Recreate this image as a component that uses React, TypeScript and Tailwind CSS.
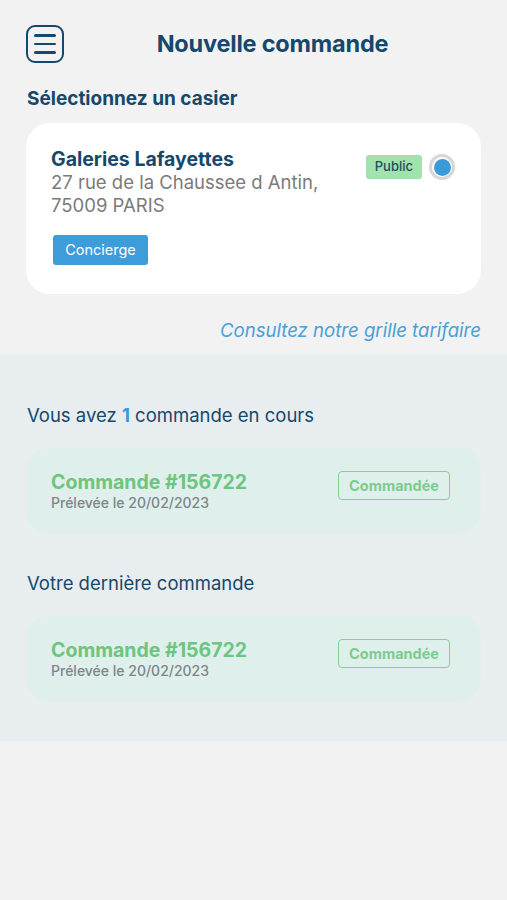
import React from "react";

const ORDERS_IN_PROGRESS = [{ id: "156722", date: "20/02/2023", status: "Commandée" }];
const LAST_ORDER = { id: "156722", date: "20/02/2023", status: "Commandée" };

function MenuIcon() {
  return (
    <div className="w-[38px] h-[38px] rounded-[9px] border-[2.5px] border-[#15486a] flex flex-col items-center justify-center gap-[6px]">
      <span className="block w-[22px] h-[2.5px] bg-[#15486a] rounded" />
      <span className="block w-[22px] h-[2.5px] bg-[#15486a] rounded" />
      <span className="block w-[22px] h-[2.5px] bg-[#15486a] rounded" />
    </div>
  );
}

function OrderCard({ id, date, status }: { id: string; date: string; status: string }) {
  return (
    <div className="mx-[26px] h-[85px] rounded-[22px] bg-[#dff0ec] flex items-center justify-between pl-[25px] pr-[31px]">
      <div className="flex flex-col">
        <span className="text-[19.5px] leading-[24px] font-bold text-[#6cc580]">Commande #{id}</span>
        <span className="text-[14px] leading-[18px] font-medium text-[#7d8588]">Prélevée le {date}</span>
      </div>
      <span className="mt-[-10px] h-[29px] px-[10px] flex items-center rounded-[4px] border-[1.5px] border-[#86cf95] text-[14.5px] font-bold text-[#7ccb8d]">
        {status}
      </span>
    </div>
  );
}

export default function App() {
  return (
    <div className="min-h-[900px] bg-[#f2f2f2] font-['Inter',sans-serif]">
      {/* Header */}
      <div className="flex items-center px-[26px] pt-[25px]">
        <MenuIcon />
        <h1 className="flex-1 text-center text-[23.5px] font-bold text-[#15486a] tracking-[-0.2px]">
          Nouvelle commande
        </h1>
      </div>

      {/* Locker selection */}
      <h2 className="px-[27px] mt-[24px] text-[19px] leading-[24px] font-bold text-[#15486a]">
        Sélectionnez un casier
      </h2>

      <div className="mx-[26px] mt-[12px] h-[171px] rounded-[24px] bg-white flex justify-between pl-[25px] pr-[26px] pt-[24px]">
        <div className="flex flex-col items-start">
          <span className="text-[19.5px] leading-[24px] font-bold text-[#15486a]">Galeries Lafayettes</span>
          <span className="text-[18.5px] leading-[23px] text-[#7a7a7a]">27 rue de la Chaussee d Antin,</span>
          <span className="text-[18.5px] leading-[23px] text-[#7a7a7a]">75009 PARIS</span>
          <button className="ml-[2px] mt-[18px] w-[95px] h-[30px] rounded-[3px] bg-[#3d9ddb] text-white text-[14.5px] leading-none">
            Concierge
          </button>
        </div>
        <div className="flex items-start gap-[7px] pt-[8px]">
          <span className="h-[24px] px-[9px] flex items-center rounded-[3px] bg-[#a1e2ad] text-[13px] font-medium text-[#1d4e5c]">
            Public
          </span>
          <span className="mt-[-1px] w-[26px] h-[26px] rounded-full border-[3px] border-[#d5d7d9] flex items-center justify-center">
            <span className="w-[17px] h-[17px] rounded-full bg-[#3b9ad9]" />
          </span>
        </div>
      </div>

      <div className="px-[26px] mt-[24px] text-right text-[18.6px] leading-[24px] italic text-[#4aa0d8]">
        Consultez notre grille tarifaire
      </div>

      {/* Orders section */}
      <div className="mt-[12px] bg-[#e8edf0] pt-[49px] pb-[40px]">
        <p className="px-[27px] text-[18.5px] leading-[24px] text-[#15486a]">
          Vous avez <span className="font-bold text-[#3b9ad9]">1</span> commande en cours
        </p>
        <div className="mt-[21px] flex flex-col gap-4">
          {ORDERS_IN_PROGRESS.map((o) => (
            <OrderCard key={o.id} {...o} />
          ))}
        </div>

        <p className="px-[27px] mt-[38px] text-[18.5px] leading-[24px] text-[#15486a]">Votre dernière commande</p>
        <div className="mt-[21px]">
          <OrderCard {...LAST_ORDER} />
        </div>
      </div>
    </div>
  );
}
